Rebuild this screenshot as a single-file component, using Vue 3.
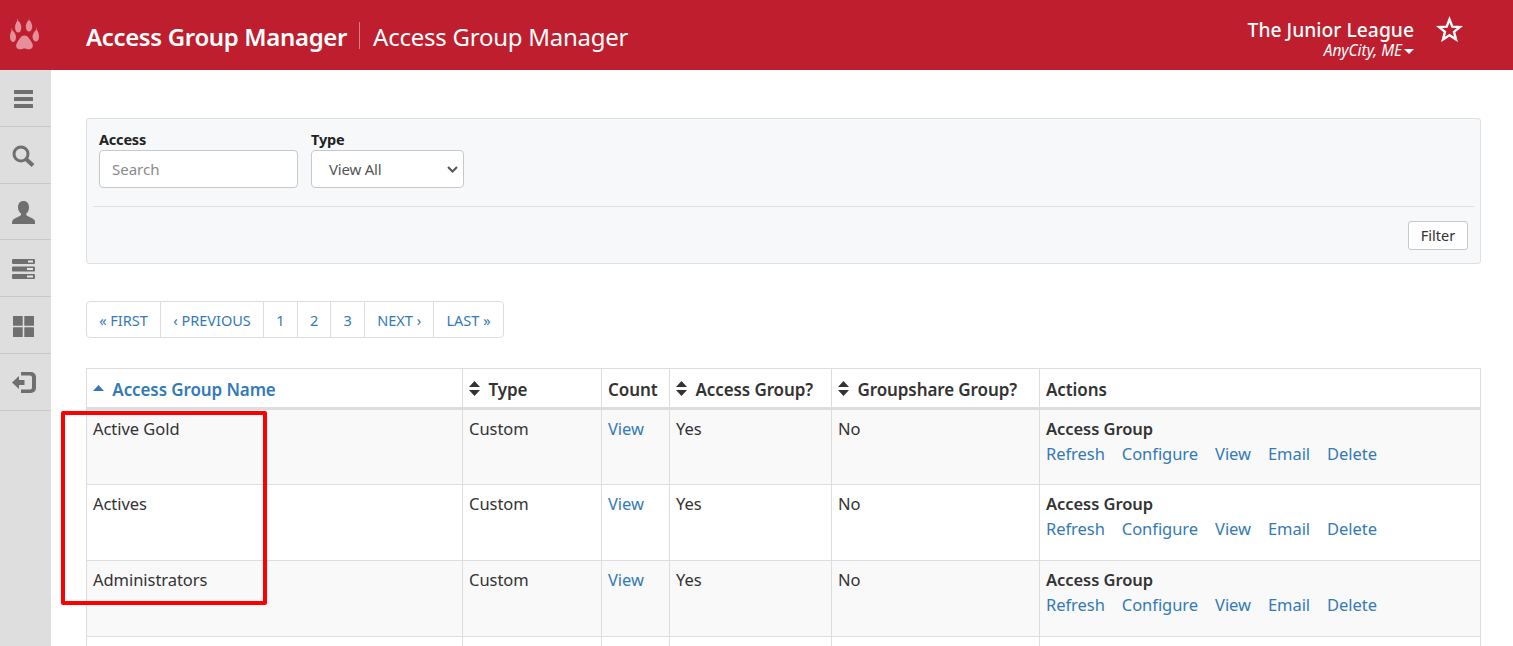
<script setup>
const pages = ['« FIRST', '‹ PREVIOUS', '1', '2', '3', 'NEXT ›', 'LAST »']
const rows = ['Active Gold', 'Actives', 'Administrators']
const actions = ['Refresh', 'Configure', 'View', 'Email', 'Delete']
</script>

<template>
  <div class="page">
    <header class="topbar">
      <div class="logo">
        <svg width="30" height="36" viewBox="0 0 30 36" fill="#e58f9a">
          <path d="M7.300 1l1 3c2 1.500 3 4 3 6.500 0 3-1.300 5-3 5s-3.300-2-3.300-5c0-2.500 1-5 2.300-6.500z" />
          <path d="M19 0l.2 3c1.800 1.500 3 4 3 6.500 0 3-1.500 5-3.200 5s-3.200-2-3.200-5c0-2.500 1.300-5 3-6.500z" />
          <path d="M1.500 10.500l1 3c2 1.500 3.500 4 3.500 6.500s-1 5-2.800 5S0 22.500 0 20c0-2.500.5-4.500 1.500-6z" />
          <path d="M26.500 10l.3 3c1.500 1.500 2.200 4 2.200 6.500S28 24.500 26 24.500s-3.500-2.500-3.500-5c0-2.500 1.800-5 3.500-6.500z" />
          <path d="M14.500 18.500c3.500 0 5 3.500 7 6.500 1.800 2.700 2 6-1 7-2 .6-4.500-.6-6-.6s-4 1.200-6 .6c-3-1-2.800-4.300-1-7 2-3 3.500-6.500 7-6.500z" />
        </svg>
      </div>
      <h1 class="title">Access Group Manager</h1>
      <span class="sep"></span>
      <span class="subtitle">Access Group Manager</span>
      <div class="org">
        <div class="org-name">The Junior League</div>
        <div class="org-city">AnyCity, ME<i class="caret"></i></div>
      </div>
      <svg class="star" width="27" height="26" viewBox="0 0 27 26" fill="none" stroke="#fff" stroke-width="2.400" stroke-linejoin="miter">
        <path d="M13.500 3.400l2.800 7.200 7.700.4-6 4.900 2 7.500-6.500-4.200-6.500 4.200 2-7.500-6-4.900 7.700-.4z" />
      </svg>
    </header>
    <div class="body">
      <nav class="sidebar">
        <a class="side-item">
          <svg width="19" height="18" viewBox="0 0 19 18" fill="#6f6f6f"><rect y="0" width="19" height="4" rx=".6"/><rect y="7" width="19" height="4" rx=".6"/><rect y="14" width="19" height="4" rx=".6"/></svg>
        </a>
        <a class="side-item">
          <svg width="23" height="22" viewBox="0 0 23 22" fill="none" stroke="#6f6f6f"><circle cx="9" cy="9" r="7" stroke-width="3"/><path d="M14 14l7 6.500" stroke-width="4"/></svg>
        </a>
        <a class="side-item">
          <svg width="23" height="23" viewBox="0 0 23 23" fill="#6f6f6f"><path d="M11.500 0c3.600 0 5.500 2.700 5.500 6.200 0 2.600-1 5-2.700 6.400-.5 1.300.2 2 2.200 2.900 2.800 1.200 5.700 2.500 6.500 4.400.3.800.3 2.100.3 3.100H0c0-1 0-2.300.3-3.100.8-1.900 3.700-3.200 6.500-4.400 2-.9 2.700-1.600 2.200-2.900C7.300 11.200 6 8.800 6 6.200 6 2.700 7.900 0 11.500 0z"/></svg>
        </a>
        <a class="side-item">
          <svg width="23" height="20" viewBox="0 0 23 20"><g fill="#6f6f6f"><rect width="23" height="5" y="0" rx="1.200"/><rect width="23" height="5" y="7.500" rx="1.200"/><rect width="23" height="5" y="15" rx="1.200"/></g><g fill="#e6e6e6"><rect x="16" y="1.500" width="5" height="2"/><rect x="15" y="9" width="6" height="2"/><rect x="15" y="16.500" width="6" height="2"/></g></svg>
        </a>
        <a class="side-item">
          <svg width="21" height="21" viewBox="0 0 21 21" fill="#6f6f6f"><rect width="9.700" height="9.700" rx=".5"/><rect x="11.300" width="9.700" height="9.700" rx=".5"/><rect y="11.300" width="9.700" height="9.700" rx=".5"/><rect x="11.300" y="11.300" width="9.700" height="9.700" rx=".5"/></svg>
        </a>
        <a class="side-item">
          <svg width="24" height="21" viewBox="0 0 24 21" fill="#6f6f6f"><path d="M9 0h10a5 5 0 0 1 5 5v11a5 5 0 0 1-5 5H9v-3.500h9a2 2 0 0 0 2-2v-10a2 2 0 0 0-2-2H9z"/><path d="M0 10.500L7 4v4h5.500v5H7v4z"/></svg>
        </a>
      </nav>
      <main class="main">
        <section class="filter">
          <div class="fields">
            <label class="field">
              <span class="field-label">Access</span>
              <input class="search" type="text" placeholder="Search" />
            </label>
            <label class="field">
              <span class="field-label">Type</span>
              <span class="select">
                <span>View All</span>
                <svg width="11" height="7" viewBox="0 0 11 7" fill="none" stroke="#555" stroke-width="2"><path d="M1 1l4.500 4.500L10 1"/></svg>
              </span>
            </label>
          </div>
          <div class="filter-foot">
            <button class="filter-btn" type="button">Filter</button>
          </div>
        </section>

        <ul class="pager">
          <li v-for="p in pages" :key="p">{{ p }}</li>
        </ul>

        <table class="grid">
          <colgroup>
            <col style="width: 376px" />
            <col style="width: 139px" />
            <col style="width: 68px" />
            <col style="width: 162px" />
            <col style="width: 208px" />
            <col />
          </colgroup>
          <thead>
            <tr>
              <th class="sorted">
                <svg class="sort" width="11" height="6" viewBox="0 0 11 6" fill="#337ab7"><path d="M5.500 0L11 6H0z"/></svg>
                Access Group Name
              </th>
              <th><svg class="sort" width="11" height="15" viewBox="0 0 11 15" fill="#333"><path d="M5.500 0L11 6H0zM5.500 15L0 9h11z"/></svg>Type</th>
              <th>Count</th>
              <th><svg class="sort" width="11" height="15" viewBox="0 0 11 15" fill="#333"><path d="M5.500 0L11 6H0zM5.500 15L0 9h11z"/></svg>Access Group?</th>
              <th><svg class="sort" width="11" height="15" viewBox="0 0 11 15" fill="#333"><path d="M5.500 0L11 6H0zM5.500 15L0 9h11z"/></svg>Groupshare Group?</th>
              <th>Actions</th>
            </tr>
          </thead>
          <tbody>
            <tr v-for="r in rows" :key="r">
              <td>{{ r }}</td>
              <td>Custom</td>
              <td><a class="link">View</a></td>
              <td>Yes</td>
              <td>No</td>
              <td>
                <div class="action-title">Access Group</div>
                <div class="actions"><a v-for="a in actions" :key="a" class="link">{{ a }}</a></div>
              </td>
            </tr>
            <tr>
              <td v-for="n in 6" :key="n"></td>
            </tr>
          </tbody>
        </table>
      </main>
    </div>
    <div class="annotation"></div>
  </div>
</template>

<style>
html, body { margin: 0; overflow: hidden; background: #fff; }
</style>

<style scoped>
.page {
  position: relative;
  height: 646px;
  overflow: hidden;
  font-family: "Noto Sans", "Open Sans", sans-serif;
  font-size: 16px;
  color: #333;
  letter-spacing: -0.2px;
}
.topbar {
  height: 70px;
  background: #be1e2d;
  color: #fff;
  display: flex;
  align-items: center;
}
.logo { width: 86px; padding-left: 10px; box-sizing: border-box; display: flex; }
.title {
  margin: 4px 0 0;
  font-size: 24px;
  font-weight: 600;
  line-height: 28px;
  letter-spacing: -0.35px;
}
.sep {
  width: 1px;
  height: 27px;
  margin-left: 12px;
  background: #d97a85;
}
.subtitle { font-size: 24px; margin: 2px 0 0 13px; letter-spacing: -0.25px; }
.org { margin-left: auto; text-align: right; padding-top: 6px; }
.org-name { font-size: 19.300px; font-weight: 500; line-height: 24px; letter-spacing: 0; }
.org-city { font-size: 15.400px; font-style: italic; line-height: 17px; letter-spacing: 0; }
.caret {
  display: inline-block;
  vertical-align: middle;
  margin-left: 2px;
  border-left: 5px solid transparent;
  border-right: 5px solid transparent;
  border-top: 5px solid #fff;
}
.star { margin: 0 50px 12px 22px; }
.body { display: flex; }
.sidebar { width: 51px; height: 576px; background: #dedede; flex: none; }
.side-item {
  height: 53.800px;
  padding: 2px 4px 0 0;
  border-bottom: 1px solid #c9c9c9;
  display: flex;
  align-items: center;
  justify-content: center;
}
.main { flex: 1; padding: 48px 32px 0 35px; min-width: 0; }
.filter {
  height: 146px;
  box-sizing: border-box;
  background: #f7f8fa;
  border: 1px solid #dddfe3;
  border-radius: 3px;
  padding: 10px 6px 0;
}
.fields { display: flex; gap: 13px; padding: 0 6px; height: 77px; }
.field { display: flex; flex-direction: column; }
.field-label { font-size: 14.500px; font-weight: 700; line-height: 21px; color: #222; }
.search, .select {
  box-sizing: border-box;
  height: 38px;
  border: 1px solid #c6c8cc;
  border-radius: 4px;
  background: #fff;
  font: inherit;
  font-size: 15px;
  color: #555;
  outline: none;
}
.search { width: 199px; padding: 0 12px; }
.search::placeholder { color: #8a8a8a; }
.select {
  width: 153px;
  padding: 0 5px 0 17px;
  display: flex;
  align-items: center;
  justify-content: space-between;
}
.filter-foot {
  border-top: 1px solid #dddfe3;
  display: flex;
  justify-content: flex-end;
  padding: 14px 6px 0 0;
}
.filter-btn {
  height: 29px;
  width: 60px;
  border: 1px solid #c6c8cc;
  border-radius: 3px;
  background: #fff;
  font: inherit;
  font-size: 14.500px;
  color: #333;
  padding: 0 0 2px;
}
.pager {
  list-style: none;
  display: inline-flex;
  margin: 37px 0 0;
  padding: 0;
  height: 37px;
  box-sizing: border-box;
  border: 1px solid #dddddd;
  border-radius: 4px;
  vertical-align: top;
}
.pager li {
  padding: 0 12.200px;
  height: 35px;
  line-height: 37px;
  font-size: 14.500px;
  letter-spacing: 0;
  color: #337ab7;
  border-left: 1px solid #dddddd;
}
.pager li:first-child { border-left: 0; }
.grid {
  display: table;
  width: 1395px;
  margin-top: 30px;
  border-collapse: collapse;
  table-layout: fixed;
}
.grid th, .grid td { border: 1px solid #dddddd; padding: 0 6px; }
.grid th {
  height: 40px;
  padding-top: 2px;
  box-sizing: border-box;
  border-bottom-width: 3px;
  text-align: left;
  font-size: 17px;
  font-weight: 600;
  letter-spacing: -0.1px;
  color: #333;
  white-space: nowrap;
}
.grid th.sorted { color: #337ab7; }
.sort { margin-right: 8.500px; vertical-align: 0; }
.sorted .sort { margin-right: 4px; vertical-align: 5px; }
.grid td {
  height: 76px;
  vertical-align: top;
  padding-top: 7px;
  line-height: 24px;
  box-sizing: border-box;
  background: #f9f9f9;
  font-size: 16.500px;
  letter-spacing: -0.05px;
}
.grid tr:nth-child(even) td { background: #fff; }
.link { color: #337ab7; }
.action-title { font-weight: 600; line-height: 24px; color: #333; }
.actions { display: flex; gap: 17px; line-height: 25px; }
.annotation {
  position: absolute;
  left: 61px;
  top: 411px;
  width: 206px;
  height: 194px;
  box-sizing: border-box;
  border: 4px solid #ff0000;
  border-radius: 2px;
}
</style>
